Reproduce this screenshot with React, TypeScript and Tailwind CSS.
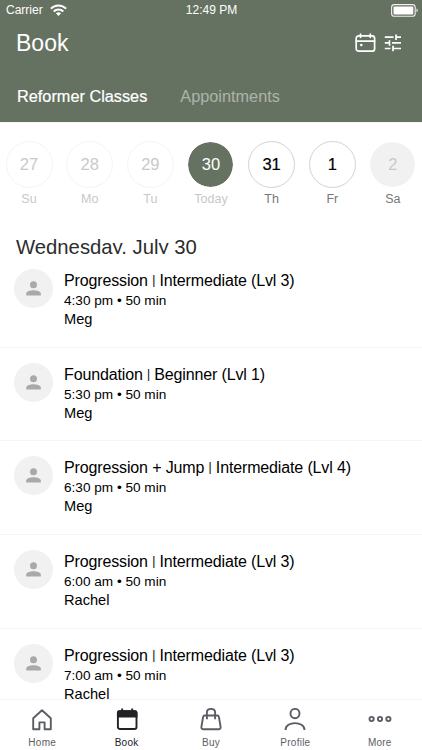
import React from "react";

const days = [
  { n: "27", d: "Su", circle: "border-[#f4f4f4] bg-white text-[#c9c9c9]", label: "text-[#c8c8c8]" },
  { n: "28", d: "Mo", circle: "border-[#f4f4f4] bg-white text-[#c9c9c9]", label: "text-[#c8c8c8]" },
  { n: "29", d: "Tu", circle: "border-[#f4f4f4] bg-white text-[#c9c9c9]", label: "text-[#c8c8c8]" },
  { n: "30", d: "Today", circle: "border-white bg-[#667261] bg-clip-padding text-white", label: "text-[#c8c8c8]" },
  { n: "31", d: "Th", circle: "border-[#d3d3d3] bg-white text-black [-webkit-text-stroke:0.2px_black]", label: "text-[#777777]" },
  { n: "1", d: "Fr", circle: "border-[#d3d3d3] bg-white text-black [-webkit-text-stroke:0.2px_black]", label: "text-[#777777]" },
  { n: "2", d: "Sa", circle: "border-white bg-[#f1f1f1] bg-clip-padding text-[#c9c9c9]", label: "text-[#777777]" },
];

const classes = [
  { name: "Progression", level: "Intermediate (Lvl 3)", time: "4:30 pm • 50 min", who: "Meg" },
  { name: "Foundation", level: "Beginner (Lvl 1)", time: "5:30 pm • 50 min", who: "Meg" },
  { name: "Progression + Jump", level: "Intermediate (Lvl 4)", time: "6:30 pm • 50 min", who: "Meg" },
  { name: "Progression", level: "Intermediate (Lvl 3)", time: "6:00 am • 50 min", who: "Rachel" },
  { name: "Progression", level: "Intermediate (Lvl 3)", time: "7:00 am • 50 min", who: "Rachel" },
];

function Wifi() {
  return (
    <svg className="ml-[7px]" width="17" height="13" viewBox="0 0 17 13" fill="none" stroke="white" strokeWidth="2">
      <path d="M.9 4.6C5.1.3 11.9.3 16.1 4.6" />
      <path d="M3.7 7.5C6.4 4.9 10.6 4.9 13.3 7.5" />
      <path d="M5.9 9.3C7.3 7.9 9.7 7.9 11.1 9.3L8.5 12Z" fill="white" stroke="none" />
    </svg>
  );
}

function Battery() {
  return (
    <svg width="28" height="13" viewBox="0 0 28 13" fill="none">
      <rect x=".6" y=".6" width="23.6" height="11.6" rx="2.8" stroke="#eef0ed" strokeWidth="1.1" />
      <rect x="2.5" y="2.4" width="19.8" height="8" rx="1" fill="white" />
      <path d="M25.5 4.3C27.3 5.2 27.3 7.7 25.5 8.5Z" fill="#e3e6e1" />
    </svg>
  );
}

function CalendarIcon() {
  return (
    <svg width="21" height="20" viewBox="0 0 21 20" fill="none" stroke="white" strokeWidth="1.7" strokeLinecap="round">
      <rect x="1.2" y="2.8" width="18.4" height="15.4" rx="2.5" />
      <path d="M1.2 8.1H19.6M5.5 1V4.3M15.3 1V4.3" />
      <circle cx="6.3" cy="12" r="1.3" fill="white" stroke="none" />
    </svg>
  );
}

function TuneIcon() {
  return (
    <svg width="18" height="18" viewBox="0 0 18 18" fill="none" stroke="white" strokeWidth="1.7">
      <path d="M.8 3.2H9.5M12 .5V6M12 3.2H17M.8 8.9H5.5M5.5 6.2V11.7M8 8.9H17M.8 14.5H6.5M9 11.8V17.3M9 14.5H17" />
    </svg>
  );
}

function Avatar() {
  return (
    <div className="flex size-[39px] shrink-0 items-center justify-center rounded-full bg-[#f1f1f1]">
      <svg width="15" height="15" viewBox="0 0 15 15" fill="#a9a9a9">
        <circle cx="7.5" cy="3.7" r="3.5" />
        <path d="M.2 14.6V12.6C.2 10.4 4.5 9.2 7.5 9.2S14.8 10.4 14.8 12.6V14.6Z" />
      </svg>
    </div>
  );
}

const navIcon = {
  Home: (
    <path d="M2.2 10.3 11 2.3 19.8 10.3V21.2H13.6V14.4H8.4V21.2H2.2Z" strokeLinejoin="round" />
  ),
  Book: (
    <>
      <rect x="1.9" y="3.3" width="18.6" height="17.7" rx="2" />
      <path d="M1.9 8.6V4.6Q1.9 3.3 3.5 3.3H19Q20.5 3.3 20.5 4.6V8.6Z" fill="#202226" />
      <path d="M6.2 .6V4M16.2 .6V4" />
    </>
  ),
  Buy: (
    <>
      <path d="M4.7 7.5H17.3Q18.7 7.5 18.9 8.9L20.6 18.8Q20.8 21.2 18.6 21.2H3.4Q1.2 21.2 1.4 18.8L3.1 8.9Q3.3 7.5 4.7 7.5Z" strokeLinejoin="round" />
      <path d="M6.9 11.3V4.6Q6.9 .9 11 .9T15.1 4.6V11.3" />
    </>
  ),
  Profile: (
    <>
      <ellipse cx="11" cy="5.6" rx="4.5" ry="4.7" />
      <path d="M1.5 22C1.5 12.8 20.5 12.8 20.5 22" />
    </>
  ),
  More: (
    <>
      <circle cx="2.6" cy="11" r="2.1" strokeWidth="1.9" />
      <circle cx="11" cy="11" r="2.1" strokeWidth="1.9" />
      <circle cx="19.4" cy="11" r="2.1" strokeWidth="1.9" />
    </>
  ),
};

type NavName = keyof typeof navIcon;
const navNames: NavName[] = ["Home", "Book", "Buy", "Profile", "More"];

export default function App() {
  return (
    <div className="flex h-[750px] w-[422px] flex-col overflow-hidden bg-white font-['Liberation_Sans',Arial,sans-serif] text-black">
      <header className="h-[122px] shrink-0 bg-[#667261] text-white">
        <div className="grid h-5 grid-cols-3 items-center pl-[6px] pr-[3px] text-[12px] leading-5">
          <div className="flex items-center">Carrier<Wifi /></div>
          <div className="pr-[2px] text-center">12:49 PM</div>
          <div className="flex justify-end"><Battery /></div>
        </div>
        <div className="flex h-[46px] items-center justify-between pl-4 pr-5">
          <h1 className="text-[23px] leading-none">Book</h1>
          <div className="flex items-center gap-2"><CalendarIcon /><TuneIcon /></div>
        </div>
        <nav className="flex h-[60px] items-center gap-[33px] pl-[17px] text-[16.3px]">
          <span className="[-webkit-text-stroke:0.2px_white]">Reformer Classes</span>
          <span className="text-[#adb4aa]">Appointments</span>
        </nav>
      </header>

      <section className="flex h-[112px] shrink-0 justify-between border-t border-[#f7f7f7] px-[6px] pt-[18px]">
        {days.map((day) => (
          <div key={day.n} className="flex w-[46px] flex-col items-center">
            <div className={`flex size-[47px] shrink-0 items-center justify-center rounded-full border text-[16.5px] ${day.circle}`}>{day.n}</div>
            <span className={`mt-[3px] text-[12.5px] leading-[16px] ${day.label}`}>{day.d}</span>
          </div>
        ))}
      </section>

      <main className="min-h-0 flex-1 overflow-hidden">
        <h2 className="h-[20px] overflow-hidden pl-4 text-[20.3px] leading-[26px] text-[#2c2c2c]">Wednesday, July 30</h2>
        {classes.map((item, i) => (
          <article key={i} className="flex h-[93.7px] gap-[11px] border-b border-[#f5f5f5] pl-[14px] pt-[15px]">
            <Avatar />
            <div className="pt-[2px]">
              <h3 className="h-5 text-[16px] leading-5 tracking-[-0.14px]">
                {item.name} <span className="align-[2.5px] text-[12px] leading-none">|</span> {item.level}
              </h3>
              <p className="h-[19px] text-[13.6px] leading-5">{item.time}</p>
              <p className="text-[14.6px] leading-[18px]">{item.who}</p>
            </div>
          </article>
        ))}
      </main>

      <footer className="grid h-[51px] shrink-0 grid-cols-5 border-t border-[#f3f3f3] bg-white pt-[8px]">
        {navNames.map((name) => (
          <div key={name} className={`flex flex-col items-center ${name === "Book" ? "text-[#202226]" : "text-[#5b5d65]"}`}>
            <svg width="24" height="24" viewBox="-1 0 24 24" fill="none" stroke="currentColor" strokeWidth="1.9">{navIcon[name]}</svg>
            <span className="mt-[5px] text-[10px] leading-3 tracking-[0.25px]">{name}</span>
          </div>
        ))}
      </footer>
    </div>
  );
}
